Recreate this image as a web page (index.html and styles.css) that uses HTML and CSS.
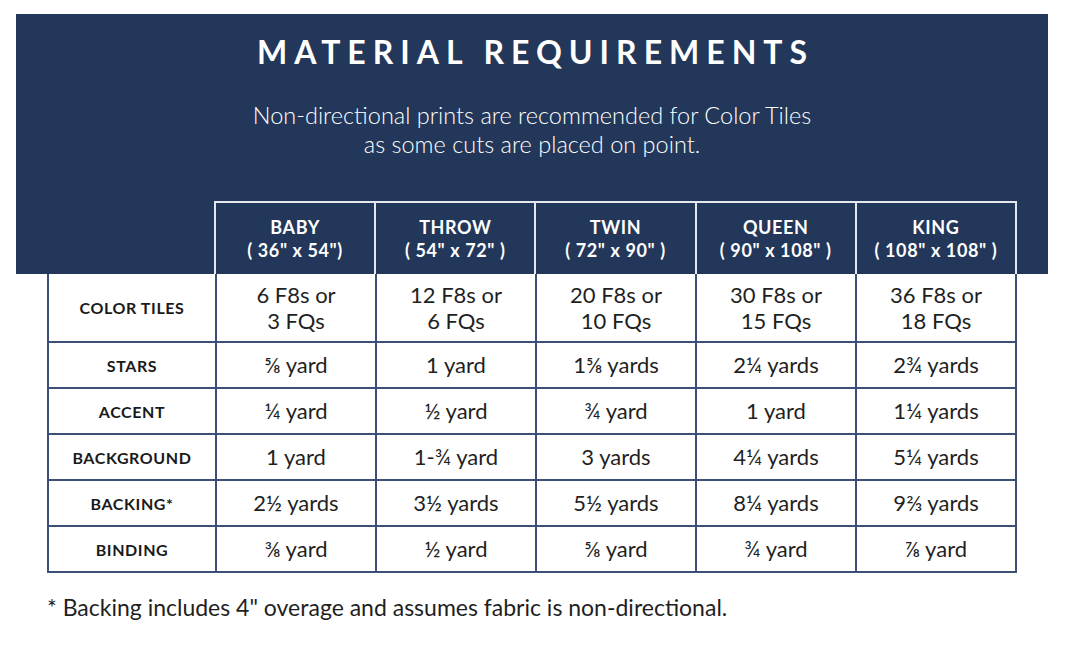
FILE: index.html
```html
<!DOCTYPE html>
<html>
<head>
<meta charset="utf-8">
<link rel="stylesheet" href="styles.css">
</head>
<body>
<div class="banner">
  <h1 class="title">MATERIAL REQUIREMENTS</h1>
  <p class="subtitle">Non-directional prints are recommended for Color Tiles<br>as some cuts are placed on point.</p>
  <table class="grid head">
    <colgroup><col class="c-label"><col><col><col><col><col></colgroup>
    <tr>
      <th class="blank"></th>
      <th>BABY<br>( 36" x 54")</th>
      <th>THROW<br>( 54" x 72" )</th>
      <th>TWIN<br>( 72" x 90" )</th>
      <th>QUEEN<br>( 90" x 108" )</th>
      <th>KING<br>( 108" x 108" )</th>
    </tr>
  </table>
</div>
<table class="grid body">
  <colgroup><col class="c-label"><col><col><col><col><col></colgroup>
  <tr class="tall">
    <th>COLOR TILES</th>
    <td>6 F8s or<br>3 FQs</td>
    <td>12 F8s or<br>6 FQs</td>
    <td>20 F8s or<br>10 FQs</td>
    <td>30 F8s or<br>15 FQs</td>
    <td>36 F8s or<br>18 FQs</td>
  </tr>
  <tr>
    <th>STARS</th>
    <td>⅝ yard</td><td>1 yard</td><td>1⅝ yards</td><td>2¼ yards</td><td>2¾ yards</td>
  </tr>
  <tr>
    <th>ACCENT</th>
    <td>¼ yard</td><td>½ yard</td><td>¾ yard</td><td>1 yard</td><td>1¼ yards</td>
  </tr>
  <tr>
    <th>BACKGROUND</th>
    <td>1 yard</td><td>1-¾ yard</td><td>3 yards</td><td>4¼ yards</td><td>5¼ yards</td>
  </tr>
  <tr>
    <th>BACKING*</th>
    <td>2½ yards</td><td>3½ yards</td><td>5½ yards</td><td>8¼ yards</td><td>9⅔ yards</td>
  </tr>
  <tr>
    <th>BINDING</th>
    <td>⅜ yard</td><td>½ yard</td><td>⅝ yard</td><td>¾ yard</td><td>⅞ yard</td>
  </tr>
</table>
<p class="note">* Backing includes 4" overage and assumes fabric is non-directional.</p>
</body>
</html>
```

FILE: styles.css
```css
html, body {
  margin: 0;
  padding: 0;
  background: #ffffff;
}
body {
  font-family: Lato, "Open Sans", sans-serif;
  color: #1f1f1f;
  padding-top: 14px;
}
.banner {
  margin-left: 16px;
  width: 1032px;
  background: #223759;
  padding: 18px 31px 0;
  box-sizing: border-box;
}
.title {
  margin: 0;
  text-align: center;
  color: #ffffff;
  font-size: 32px;
  line-height: 40px;
  font-weight: 700;
  letter-spacing: 7px;
  padding-left: 7px;
}
.subtitle {
  margin: 29px 0 0;
  text-align: center;
  color: #ffffff;
  font-size: 23.5px;
  line-height: 29px;
  font-weight: 300;
}
.grid {
  table-layout: fixed;
  width: 970px;
  border-collapse: collapse;
}
.c-label {
  width: 168px;
}
.head {
  margin-top: 42px;
}
.head th {
  height: 71px;
  padding: 0;
  color: #ffffff;
  font-size: 18px;
  line-height: 23px;
  font-weight: 700;
  letter-spacing: 0.6px;
  border: 2px solid #e3e7ee;
  border-bottom: none;
  vertical-align: middle;
}
.head th.blank {
  border: none;
}
.body {
  margin-left: 47px;
}
.body th,
.body td {
  border: 2px solid #3c5077;
  border-top: none;
  height: 44px;
  padding: 0;
  text-align: center;
  vertical-align: middle;
}
.body tr.tall th,
.body tr.tall td {
  height: 67px;
}
.body th {
  font-size: 16px;
  font-weight: 700;
  letter-spacing: 0.6px;
  color: #1a1a1a;
}
.body td {
  font-size: 22px;
  line-height: 26px;
  font-weight: 400;
  color: #1f1f1f;
}
.note {
  margin: 20px 0 0 47px;
  font-size: 23px;
  line-height: 28px;
  font-weight: 400;
  color: #1f1f1f;
}
```
